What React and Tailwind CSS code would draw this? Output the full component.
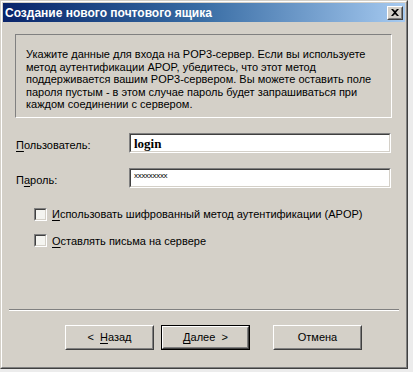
import React from "react";

const font = { fontFamily: '"Liberation Sans", Arial, sans-serif' };

function Sunken({ className = "", children }) {
  return (
    <div className={"border border-t-[#808080] border-l-[#808080] border-b-white border-r-white " + className}>
      <div className="h-full w-full border border-t-[#404040] border-l-[#404040] border-b-[#d4d0c8] border-r-[#d4d0c8] bg-white">
        {children}
      </div>
    </div>
  );
}

function Button({ children, isDefault = false, className = "" }) {
  const inner = (
    <div className="h-full w-full border border-t-white border-l-white border-b-[#404040] border-r-[#404040]">
      <div className="flex h-full w-full items-center justify-center border border-t-[#d4d0c8] border-l-[#d4d0c8] border-b-[#808080] border-r-[#808080] text-[11px] text-black">
        {children}
      </div>
    </div>
  );
  if (isDefault) {
    return <div className={"h-[25px] w-[89px] border border-black " + className}>{inner}</div>;
  }
  return <div className={"h-[25px] w-[89px] " + className}>{inner}</div>;
}

function Checkbox({ u, rest }) {
  return (
    <div className="flex items-center">
      <Sunken className="h-[13px] w-[13px]">
        <div className="h-full w-full bg-[#f4f4f0]" />
      </Sunken>
      <span className="ml-[5px] text-[11px] text-black">
        <span className="underline underline-offset-2">{u}</span>
        {rest}
      </span>
    </div>
  );
}

export default function App() {
  return (
    <div className="h-[372px] w-[413px] bg-[#ececec]" style={font}>
      <div className="flex h-[369px] w-[408px] flex-col border border-t-[#d4d0c8] border-l-[#d4d0c8] border-b-[#404040] border-r-[#404040] bg-[#d4d0c8]">
        <div className="flex h-full flex-col border border-t-white border-l-white border-b-[#808080] border-r-[#808080] p-px">
          {/* Title bar */}
          <div className="flex h-[19px] items-center bg-linear-to-r from-[#0a246a] via-[#3a6ea5] to-[#a6caf0] pl-[2px] pr-[2px]">
            <span className="flex-1 text-[12px] font-bold text-white">Создание нового почтового ящика</span>
            <div className="h-[14px] w-[16px] border border-t-white border-l-white border-b-[#404040] border-r-[#404040] bg-[#d4d0c8]">
              <div className="flex h-full w-full items-center justify-center border border-t-[#d4d0c8] border-l-[#d4d0c8] border-b-[#808080] border-r-[#808080]">
                <svg width="8" height="7" viewBox="0 0 8 7">
                  <path d="M0 0h2l2 2 2-2h2L5 3.5 8 7H6L4 5 2 7H0l3-3.5z" fill="#000" />
                </svg>
              </div>
            </div>
          </div>

          {/* Info box */}
          <div className="ml-[12px] mt-[12px] h-[84px] w-[377px] border border-t-[#808080] border-l-[#808080] border-b-white border-r-white">
            <div className="px-[10px] pt-[13px] text-[11px] leading-[12.5px] text-black">
              Укажите данные для входа на POP3-сервер. Если вы используете метод аутентификации APOP, убедитесь, что этот метод поддерживается вашим POP3-сервером. Вы можете оставить поле пароля пустым - в этом случае пароль будет запрашиваться при каждом соединении с сервером.
            </div>
          </div>

          {/* Fields */}
          <div className="mt-[15px] flex items-center">
            <span className="ml-[13px] w-[113px] pt-[4px] text-[11px] text-black">
              <span className="underline underline-offset-2">П</span>ользователь:
            </span>
            <Sunken className="h-[20px] w-[262px]">
              <div className="pl-[3px] pt-[1px] text-[13px] font-bold leading-[16px] text-black" style={{ fontFamily: '"Liberation Serif", "Times New Roman", serif' }}>
                login
              </div>
            </Sunken>
          </div>
          <div className="mt-[14px] flex items-center">
            <span className="ml-[13px] w-[113px] pt-[4px] text-[11px] text-black">
              П<span className="underline underline-offset-2">а</span>роль:
            </span>
            <Sunken className="h-[20px] w-[262px]">
              <div className="pl-[3px] text-[8px] leading-[12px] tracking-[-0.3px] text-black">xxxxxxxxx</div>
            </Sunken>
          </div>

          {/* Checkboxes */}
          <div className="ml-[31px] mt-[18px] flex flex-col gap-[10px]">
            <Checkbox u="И" rest="спользовать шифрованный метод аутентификации (APOP)" />
            <Checkbox u="О" rest="ставлять письма на сервере" />
          </div>

          <div className="flex-1" />

          {/* Separator */}
          <div className="mx-[6px] h-[2px] border-t border-b border-t-[#808080] border-b-white" />

          {/* Buttons */}
          <div className="mb-[16px] mt-[14px] flex">
            <Button className="ml-[62px]">
              <span>&lt;&nbsp;&nbsp;<span className="underline underline-offset-2">Н</span>азад</span>
            </Button>
            <Button isDefault className="ml-[7px]">
              <span><span className="underline underline-offset-2">Д</span>алее&nbsp;&nbsp;&gt;</span>
            </Button>
            <Button className="ml-[23px]">Отмена</Button>
          </div>
        </div>
      </div>
    </div>
  );
}
